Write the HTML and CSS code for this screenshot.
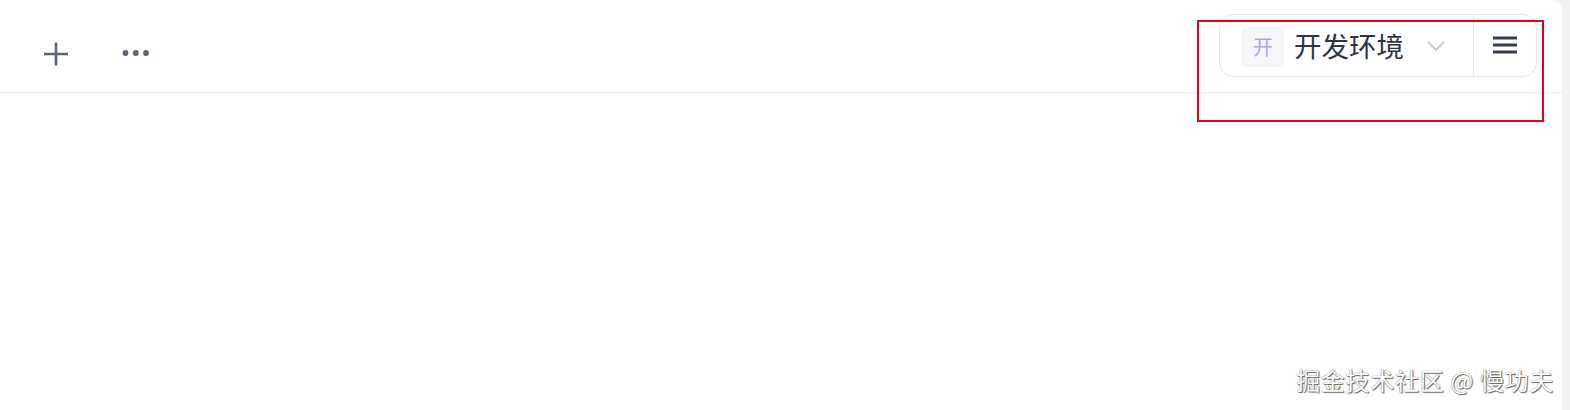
FILE: index.html
```html
<!DOCTYPE html>
<html lang="zh-CN">
<head>
    <meta charset="UTF-8">
    <meta name="viewport" content="width=device-width, initial-scale=1.0">
    <title>开发环境</title>
    <link rel="stylesheet" href="styles.css">
</head>
<body>
    <div class="panel">
        <div class="header">
            <div class="tools">
                <button class="icon-btn plus" title="新建">
                    <svg width="24" height="24" viewBox="0 0 24 24">
                        <path d="M12 0.5v23M0 12h24" stroke="#5f6379" stroke-width="2.6" fill="none"/>
                    </svg>
                </button>
                <button class="icon-btn more" title="更多">
                    <svg width="28" height="8" viewBox="0 0 28 8">
                        <circle cx="3.5" cy="4" r="2.9" fill="#5f6379"/>
                        <circle cx="13.8" cy="4" r="2.9" fill="#5f6379"/>
                        <circle cx="24" cy="4" r="2.9" fill="#5f6379"/>
                    </svg>
                </button>
            </div>
            <div class="env-switch">
                <div class="env">
                    <span class="env-avatar">开</span>
                    <span class="env-name">开发环境</span>
                    <svg class="chevron" width="18" height="10" viewBox="0 0 18 10">
                        <path d="M1 1l8 8 8-8" stroke="#c4c6cc" stroke-width="1.8" fill="none"/>
                    </svg>
                </div>
                <div class="menu">
                    <svg width="24" height="18" viewBox="0 0 24 18">
                        <path d="M0 2h24M0 9h24M0 16h24" stroke="#383e4e" stroke-width="2.8" fill="none"/>
                    </svg>
                </div>
            </div>
        </div>
        <div class="content"></div>
    </div>
    <div class="highlight"></div>
    <div class="watermark">掘金技术社区 @ 慢功夫</div>
</body>
</html>
```

FILE: styles.css
```css
body {
    margin: 0;
    height: 410px;
    background-color: #f1f2f4;
    font-family: "Noto Sans CJK SC", "Noto Sans", sans-serif;
    overflow: hidden;
}
.panel {
    width: 1562px;
    height: 410px;
    background-color: #fff;
    border-top-right-radius: 10px;
}
.header {
    display: flex;
    justify-content: space-between;
    align-items: flex-start;
    height: 92px;
    border-bottom: 1px solid #ececee;
}
.tools {
    display: flex;
    align-items: center;
    padding-left: 44px;
    padding-top: 42px;
    gap: 54px;
}
.icon-btn {
    display: flex;
    align-items: center;
    padding: 0;
    border: none;
    background: none;
    cursor: pointer;
}
.more {
    margin-top: -3px;
}
.env-switch {
    display: flex;
    margin-top: 14px;
    margin-right: 25px;
    height: 61px;
    border: 1px solid #e6e7eb;
    border-radius: 14px;
}
.env {
    display: flex;
    align-items: center;
    padding: 0 28px 0 22px;
    border-right: 1px solid #e6e7eb;
}
.env-avatar {
    display: flex;
    align-items: center;
    justify-content: center;
    width: 42px;
    height: 40px;
    margin-top: 2px;
    background-color: #f6f6fa;
    border-radius: 4px;
    color: #b0a3e6;
    font-size: 20px;
}
.env-name {
    margin-left: 10px;
    font-size: 27.5px;
    color: #2f3545;
    line-height: 1;
}
.chevron {
    margin-left: 23px;
}
.menu {
    display: flex;
    align-items: center;
    justify-content: center;
    width: 62px;
    margin-top: -1px;
}
.highlight {
    position: absolute;
    left: 1197px;
    top: 20px;
    width: 343px;
    height: 98px;
    border: 2px solid #e3001b;
}
.watermark {
    position: absolute;
    right: 16px;
    top: 362px;
    font-size: 24px;
    color: #fff;
    text-shadow: 0 0 1px #444, 1px 1px 1px #666;
    letter-spacing: 0.7px;
}
```
